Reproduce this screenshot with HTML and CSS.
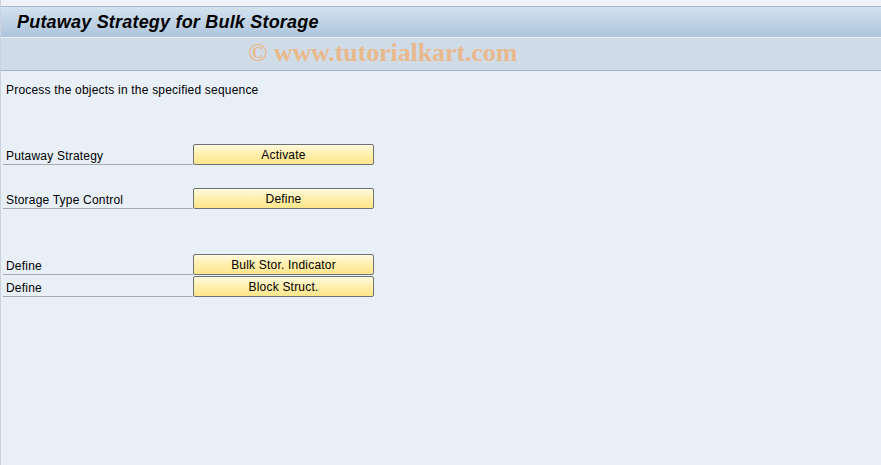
FILE: index.html
```html
<!DOCTYPE html>
<html lang="en">
<head>
  <meta charset="UTF-8" />
  <title>Putaway Strategy for Bulk Storage</title>
  <link rel="stylesheet" href="styles.css">
</head>
<body>
  <div class="screen">
    <div class="top-strip"></div>

    <div class="title-bar">
      <h1>Putaway Strategy for Bulk Storage</h1>
    </div>

    <div class="toolbar">
      <span class="watermark">© www.tutorialkart.com</span>
    </div>

    <div class="content">
      <div class="row"><span class="intro">Process the objects in the specified sequence</span></div>
      <div class="row"></div>
      <div class="row"></div>

      <div class="row">
        <span class="label">Putaway Strategy</span>
        <button class="btn">Activate</button>
      </div>
      <div class="row"></div>

      <div class="row">
        <span class="label">Storage Type Control</span>
        <button class="btn">Define</button>
      </div>
      <div class="row"></div>
      <div class="row"></div>

      <div class="row">
        <span class="label">Define</span>
        <button class="btn">Bulk Stor. Indicator</button>
      </div>
      <div class="row">
        <span class="label">Define</span>
        <button class="btn">Block Struct.</button>
      </div>
    </div>
  </div>
</body>
</html>
```

FILE: styles.css
```css
html, body {
  margin: 0;
  padding: 0;
  height: 100%;
}

body {
  font-family: "Liberation Sans", Arial, sans-serif;
  font-size: 12px;
  letter-spacing: 0.2px;
  color: #000;
  background: #e8eff7;
}

.screen {
  height: 465px;
  display: flex;
  flex-direction: column;
  border-left: 1px solid #c9d2dd;
  background: #e8eff7;
}

.top-strip {
  height: 6px;
  background: #eef2f7;
  border-bottom: 1px solid #a9b8cb;
}

/* title */
.title-bar {
  height: 30px;
  background: linear-gradient(to bottom, #d4e2ef, #adc4dc);
  border-bottom: 1px solid #e9f0f7;
  display: flex;
  align-items: center;
  padding-left: 16px;
}

.title-bar h1 {
  margin: 0;
  font-size: 18px;
  font-weight: bold;
  font-style: italic;
  color: #000;
}

.toolbar {
  height: 32px;
  background: #cfdce7;
  border-bottom: 1px solid #a4b4c8;
  display: flex;
  align-items: center;
  padding-left: 247px;
}

.watermark {
  font-family: "Liberation Serif", "Times New Roman", serif;
  font-weight: bold;
  font-size: 26px;
  letter-spacing: -0.1px;
  line-height: 26px;
  margin-top: -2px;
  color: #e9b98e;
}

/* rows */
.content {
  flex: 1;
  padding: 7px 0 0 2px;
}

.row {
  height: 22px;
  display: flex;
  align-items: flex-start;
}

.intro {
  line-height: 25px;
  padding-left: 3px;
}

.label {
  width: 190px;
  height: 21px;
  line-height: 25px;
  padding-left: 3px;
  border-bottom: 1px solid #a5abb3;
  box-sizing: border-box;
}

.btn {
  width: 181px;
  height: 21px;
  padding: 1px 0 0;
  font-family: "Liberation Sans", Arial, sans-serif;
  font-size: 12px;
  letter-spacing: 0.2px;
  color: #000;
  border: 1px solid #6e7175;
  border-radius: 2px;
  background: linear-gradient(to bottom, #fffae0 0%, #fff0b0 45%, #ffe68c 100%);
  cursor: pointer;
}
```
